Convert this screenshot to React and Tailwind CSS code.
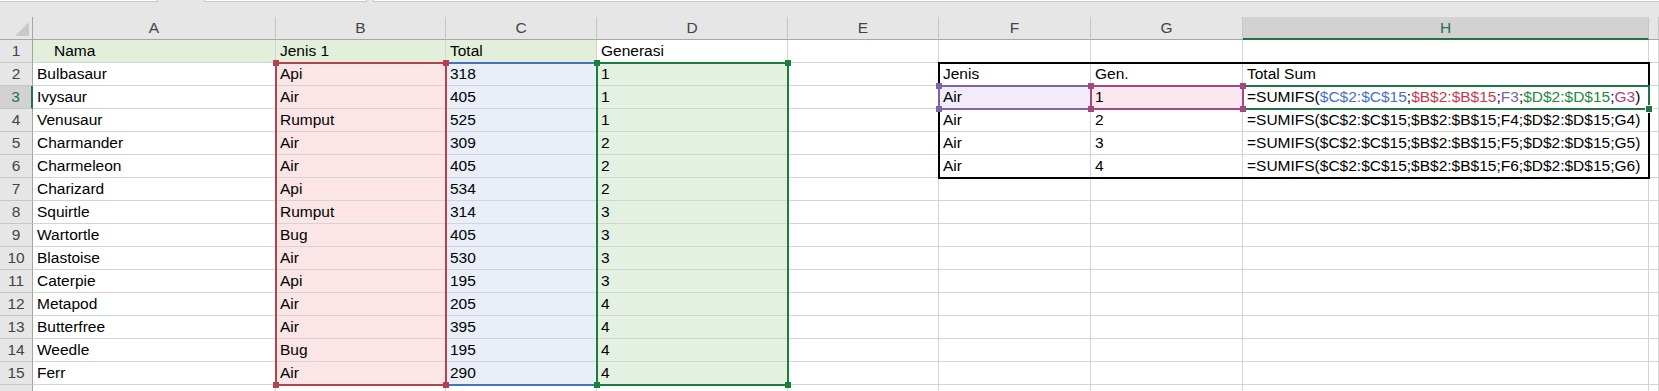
import React from "react";

// column left edges (after the row-number column), last entry is the right edge of the window
const colX = [33, 276, 446, 597, 788, 939, 1091, 1243, 1649, 1659];
const colNames = ["A", "B", "C", "D", "E", "F", "G", "H", ""];
const ROW_H = 23;

const pokemon = [
  ["Bulbasaur", "Api", "318", "1"],
  ["Ivysaur", "Air", "405", "1"],
  ["Venusaur", "Rumput", "525", "1"],
  ["Charmander", "Air", "309", "2"],
  ["Charmeleon", "Air", "405", "2"],
  ["Charizard", "Api", "534", "2"],
  ["Squirtle", "Rumput", "314", "3"],
  ["Wartortle", "Bug", "405", "3"],
  ["Blastoise", "Air", "530", "3"],
  ["Caterpie", "Api", "195", "3"],
  ["Metapod", "Air", "205", "4"],
  ["Butterfree", "Air", "395", "4"],
  ["Weedle", "Bug", "195", "4"],
  ["Ferr", "Air", "290", "4"],
];

const sumifs = (n) => `=SUMIFS($C$2:$C$15;$B$2:$B$15;F${n};$D$2:$D$15;G${n})`;

function ActiveFormula() {
  return (
    <span>
      =SUMIFS(
      <span className="text-[#4472c4]">$C$2:$C$15</span>;
      <span className="text-[#c23b4a]">$B$2:$B$15</span>;
      <span className="text-[#8064a2]">F3</span>;
      <span className="text-[#1e8a3a]">$D$2:$D$15</span>;
      <span className="text-[#a5467f]">G3</span>)
    </span>
  );
}

function buildRows() {
  const rows = [];
  for (let r = 1; r <= 16; r++) {
    const cells = Array(9).fill("");
    if (r === 1) {
      cells[0] = "Nama";
      cells[1] = "Jenis 1";
      cells[2] = "Total";
      cells[3] = "Generasi";
    } else if (r <= 15) {
      const p = pokemon[r - 2];
      cells[0] = p[0];
      cells[1] = p[1];
      cells[2] = p[2];
      cells[3] = p[3];
    }
    if (r === 2) {
      cells[5] = "Jenis";
      cells[6] = "Gen.";
      cells[7] = "Total Sum";
    } else if (r >= 3 && r <= 6) {
      cells[5] = "Air";
      cells[6] = String(r - 2);
      cells[7] = r === 3 ? <ActiveFormula /> : sumifs(r);
    }
    rows.push(cells);
  }
  return rows;
}

function cellBg(c, r) {
  if (r === 1 && c < 3) return "bg-[#e2efda]";
  if (r >= 2 && r <= 15) {
    if (c === 1) return "bg-[#fbe5e6]";
    if (c === 2) return "bg-[#e9eef8]";
    if (c === 3) return "bg-[#e4f0e2]";
  }
  if (r === 3 && c === 5) return "bg-[#f2ecf8]";
  if (r === 3 && c === 6) return "bg-[#fbe8ef]";
  return "bg-white";
}

function Range({ c1, c2, r1, r2, border, square, corners = [], z = "z-10" }) {
  const left = colX[c1] - 1;
  const top = r1 * ROW_H - 1;
  const width = colX[c2 + 1] - colX[c1] + 2;
  const height = (r2 - r1 + 1) * ROW_H + 2;
  const pts = {
    tl: [colX[c1], r1 * ROW_H],
    tr: [colX[c2 + 1], r1 * ROW_H],
    bl: [colX[c1], (r2 + 1) * ROW_H],
    br: [colX[c2 + 1], (r2 + 1) * ROW_H],
  };
  return (
    <>
      <div
        className={`absolute border-2 pointer-events-none ${border} ${z}`}
        style={{ left, top, width, height }}
      />
      {corners.map((k) => (
        <div
          key={k}
          className={`absolute w-[6px] h-[6px] ${square} ${z}`}
          style={{ left: pts[k][0] - 3, top: pts[k][1] - 3 }}
        />
      ))}
    </>
  );
}

export default function App() {
  const rows = buildRows();
  const activeRow = 3;
  const activeCol = 7;

  return (
    <div className="w-[1659px] h-[391px] overflow-hidden bg-white text-[15.5px] text-black font-['Liberation_Sans',Arial,sans-serif]">
      {/* formula bar leftovers */}
      <div className="h-[17px] bg-[#e6e6e6] flex items-start">
        <div className="w-[158px] h-[2px] bg-white border-b border-r border-[#c6c6c6]" />
        <div className="w-[46px]" />
        <div className="w-[163px] h-[2px] bg-white border-b border-x border-[#c6c6c6]" />
        <div className="w-[6px]" />
        <div className="flex-1 h-[2px] bg-white border-b border-l border-[#c6c6c6]" />
      </div>

      <div className="relative">
        <div className="grid grid-cols-[33px_243px_170px_151px_191px_151px_152px_152px_406px_10px]">
          {/* column headers */}
          <div className="h-[23px] bg-[#e6e6e6] border-r border-b border-[#a6a6a6]">
            <svg width="32" height="22" viewBox="0 0 32 22">
              <polygon points="29,5 29,19 15,19" fill="#c9c9c9" />
            </svg>
          </div>
          {colNames.map((name, i) =>
            i === activeCol ? (
              <div
                key={i}
                className="h-[23px] flex items-center justify-center bg-[#d2d2d2] text-[#217346] border-r border-r-[#c6c6c6] border-b-2 border-b-[#217346]"
              >
                {name}
              </div>
            ) : (
              <div
                key={i}
                className="h-[23px] flex items-center justify-center bg-[#e6e6e6] text-[#444] border-r border-r-[#c6c6c6] border-b border-b-[#a6a6a6]"
              >
                {name}
              </div>
            )
          )}

          {rows.map((cells, ri) => {
            const r = ri + 1;
            return (
              <React.Fragment key={r}>
                {r === activeRow ? (
                  <div className="h-[23px] flex items-end justify-center bg-[#d2d2d2] text-[#217346] border-r-2 border-r-[#217346] border-b border-b-[#c6c6c6]">
                    {r}
                  </div>
                ) : (
                  <div className="h-[23px] flex items-end justify-center bg-[#e6e6e6] text-[#444] border-r border-r-[#a6a6a6] border-b border-b-[#c6c6c6]">
                    {r < 16 ? r : ""}
                  </div>
                )}
                {cells.map((v, c) => (
                  <div
                    key={c}
                    className={`h-[23px] flex items-end px-[4px] whitespace-nowrap border-r border-b border-[#d4d4d4] ${cellBg(c, r)} ${
                      r === 1 && c === 0 ? "pl-[21px]" : ""
                    }`}
                  >
                    {v}
                  </div>
                ))}
              </React.Fragment>
            );
          })}
        </div>

        {/* outline of the lookup table */}
        <Range c1={5} c2={7} r1={2} r2={6} border="border-black" square="bg-black" z="z-10" />

        {/* formula reference highlights */}
        <Range c1={2} c2={2} r1={2} r2={15} border="border-[#4472c4]" square="bg-[#4472c4]" z="z-10" />
        <Range c1={1} c2={1} r1={2} r2={15} border="border-[#b4424b]" square="bg-[#b4424b]" corners={["tl", "tr", "bl", "br"]} z="z-20" />
        <Range c1={3} c2={3} r1={2} r2={15} border="border-[#17803a]" square="bg-[#17803a]" corners={["tl", "tr", "bl", "br"]} z="z-20" />
        <Range c1={5} c2={5} r1={3} r2={3} border="border-[#7f63a8]" square="bg-[#7f63a8]" corners={["tl", "bl"]} z="z-20" />
        <Range c1={6} c2={6} r1={3} r2={3} border="border-[#a3477f]" square="bg-[#a3477f]" corners={["tl", "tr", "bl", "br"]} z="z-30" />

        {/* active cell */}
        <Range c1={7} c2={7} r1={3} r2={3} border="border-[#217346]" square="bg-[#217346] outline outline-1 outline-white" corners={["br"]} z="z-20" />
      </div>
    </div>
  );
}
